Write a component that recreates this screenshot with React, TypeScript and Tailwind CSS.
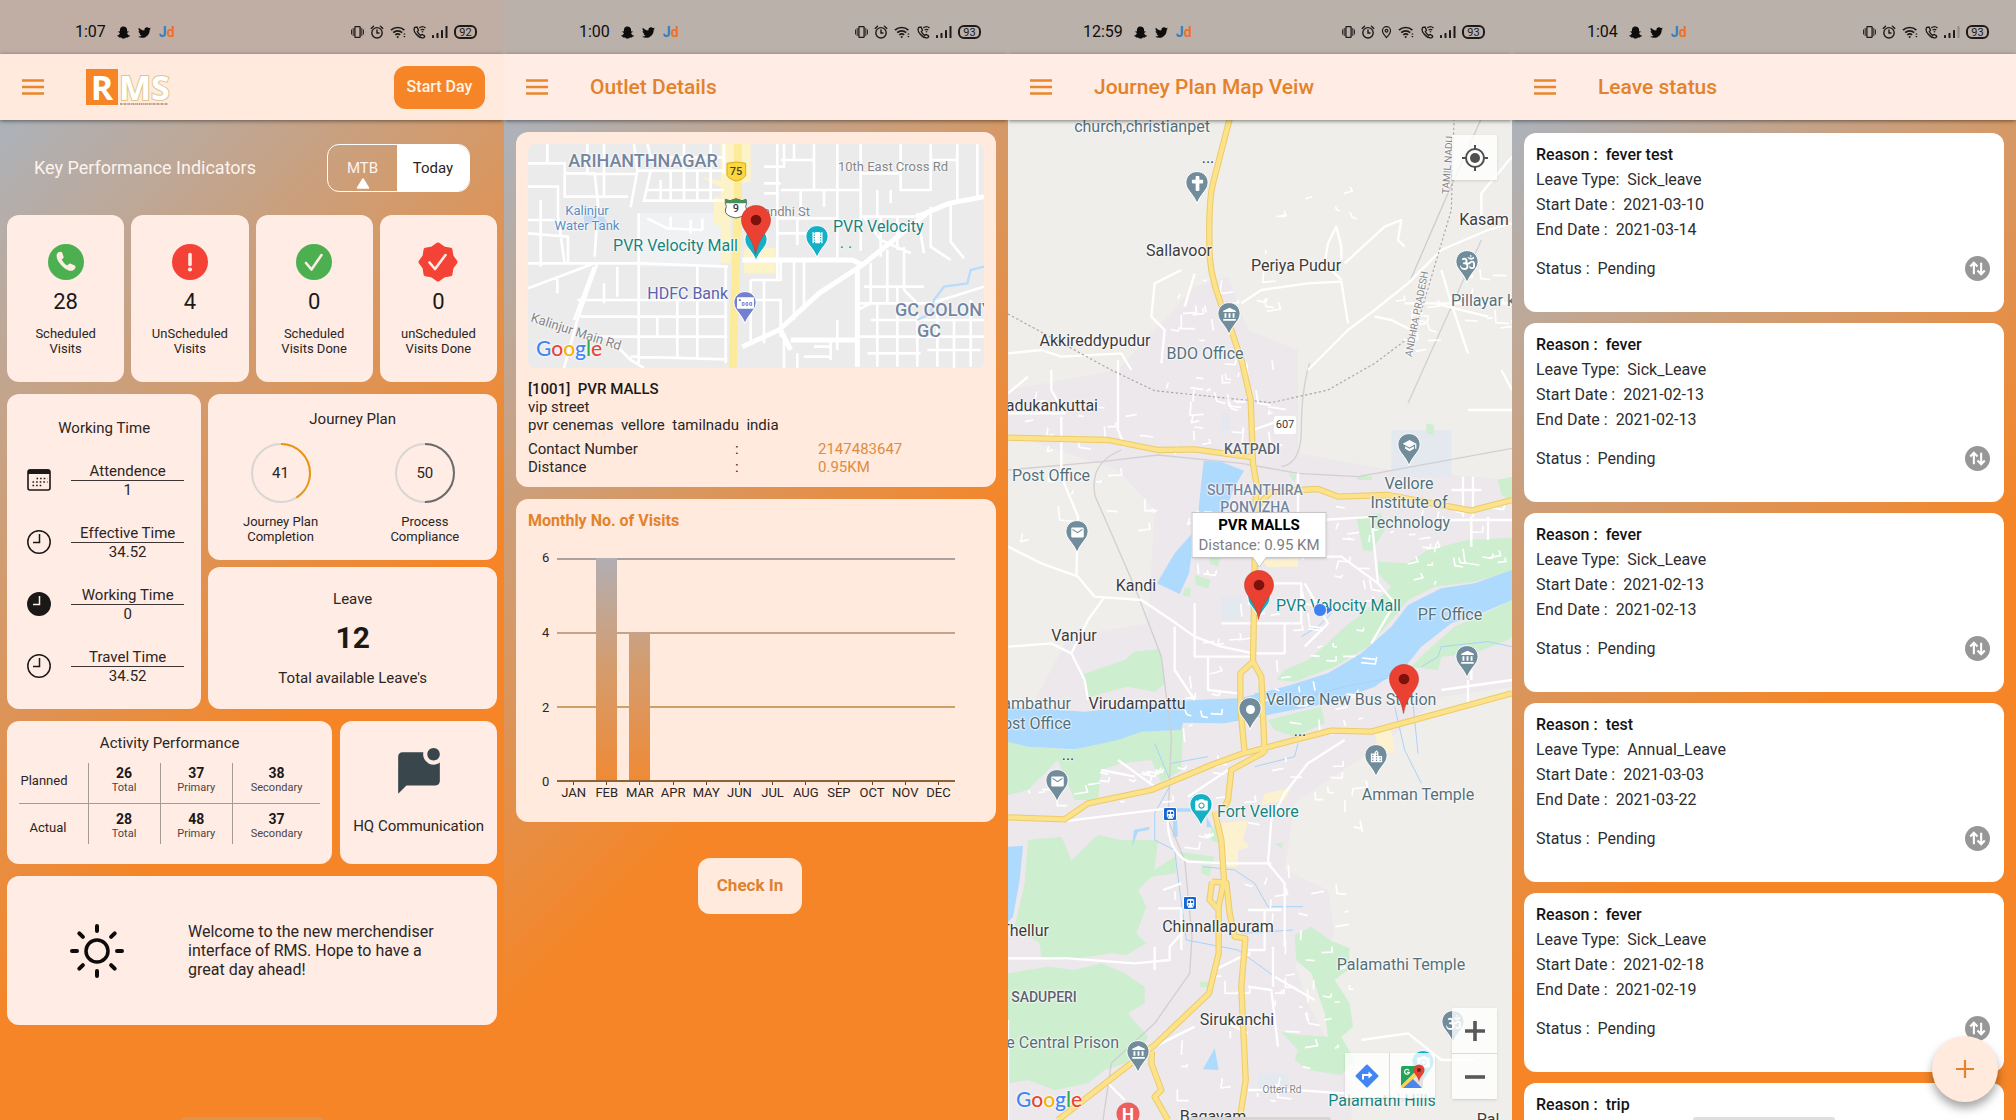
import React from "react";
import type { ReactNode } from "react";
import { FaSnapchatGhost, FaTwitter, FaOm, FaCross } from "react-icons/fa";
import {
  MdAccountBalance,
  MdCameraAlt,
  MdDirectionsSubway,
  MdEmail,
  MdLocationCity,
  MdMarkChatUnread,
  MdSchool,
  MdTheaters,
} from "react-icons/md";

/* ---------- status bar ---------- */

function StatusIcons({ location, weakSignal, battery }: { location?: boolean; weakSignal?: boolean; battery: string }) {
  return (
    <div className="flex items-center gap-[6px] text-[#1d1a19]">
      <svg viewBox="0 0 13 14" className="h-[14px] w-[13px]" fill="none" stroke="currentColor" strokeWidth="1.3">
        <rect x="3.9" y="1.700" width="5.200" height="10.600" rx=".6" />
        <path d="M2.200 3v8M10.800 3v8" strokeWidth=".9" />
        <path d="M.6 4.500v5M12.400 4.500v5" strokeWidth="1" />
      </svg>
      <svg viewBox="0 0 14 14" className="h-[14px] w-[14px]" fill="none" stroke="currentColor" strokeWidth="1.4" strokeLinecap="round">
        <circle cx="7" cy="7.8" r="5.200" />
        <path d="M7 5v3h2M1.200 3.400 3.500 1.300M12.800 3.400 10.500 1.300" />
      </svg>
      {location && (
        <svg viewBox="0 0 12 14" className="h-[14px] w-[11px]" fill="none" stroke="currentColor" strokeWidth="1.3">
          <path d="M6 13C3.500 10.300 1.600 8.200 1.600 5.600a4.400 4.400 0 0 1 8.800 0C10.400 8.200 8.500 10.300 6 13Z" />
          <circle cx="6" cy="5.600" r="1.500" />
        </svg>
      )}
      <svg viewBox="0 0 17 14" className="h-[14px] w-[17px]" fill="none" stroke="currentColor" strokeWidth="1.700">
        <path d="M1 5.200a9.600 9.600 0 0 1 13.400 0M3.200 7.700a6.500 6.500 0 0 1 9-.1M5.300 10a3.500 3.500 0 0 1 4.800 0" />
        <circle cx="7.700" cy="12" r="1" fill="currentColor" stroke="none" />
        <path d="M13.200 9.500l1.200-1.500 1.200 1.500ZM13.200 11l1.200 1.500 1.200-1.500Z" fill="currentColor" stroke="none" />
      </svg>
      <svg viewBox="0 0 13 14" className="h-[14px] w-[13px]" fill="none" stroke="currentColor" strokeWidth="1.300">
        <path d="M2 2.300c-1.300 1.500-.9 4.500 1.300 7s5 4 7 3.500c1-.3 1.500-1 1.300-1.800L9.300 9.400l-1.700 1C6.300 9.700 4.900 8.200 4.300 6.600l1.200-1.500L4 2Z" />
        <path d="M6.300 3a4.700 4.700 0 0 1 6.200 0M7.700 5a3 3 0 0 1 3.600 0" />
        <circle cx="9.500" cy="6.800" r=".8" fill="currentColor" stroke="none" />
      </svg>
      <svg viewBox="0 0 16 14" className="h-[14px] w-[16px]" fill="currentColor">
        <rect x="0" y="10" width="2" height="3" rx=".5" />
        <rect x="4.500" y="8" width="2" height="5" rx=".5" />
        <rect x="9" y="5" width="2" height="8" rx=".5" />
        <rect x="13.500" y="1" width="2" height="12" rx=".5" opacity={weakSignal ? 0.25 : 1} />
      </svg>
      <span className="flex h-[14px] w-[23px] items-center justify-center rounded-[6px] border-2 border-current text-[11px] leading-none">
        {battery}
      </span>
    </div>
  );
}

interface PhoneProps {
  time: string;
  battery: string;
  tint?: string;
  barTint?: string;
  location?: boolean;
  weakSignal?: boolean;
  header: ReactNode;
  homeTint: string;
  children: ReactNode;
}

function Phone({ time, battery, tint = "bg-[#bbb1ab]", barTint = "bg-[#feece5]", location, weakSignal, header, homeTint, children }: PhoneProps) {
  return (
    <section className="relative flex h-screen min-w-0 flex-col overflow-hidden bg-[linear-gradient(135deg,#adb2b9_8%,#f58526_63%)]">
      <div className={`flex h-[54px] shrink-0 items-center justify-between pt-[10px] pr-[27px] pl-[75px] ${tint}`}>
        <div className="flex items-center gap-2 text-[#0f0d0c]">
          <span className="mr-[3px] text-base leading-5">{time}</span>
          <FaSnapchatGhost className="size-[13px]" />
          <FaTwitter className="size-[13px]" />
          <span className="text-[14px] leading-5 font-bold">
            <span className="text-[#2f7fc4]">J</span>
            <span className="text-[#f0702a]">d</span>
          </span>
        </div>
        <StatusIcons location={location} weakSignal={weakSignal} battery={battery} />
      </div>
      <header className={`relative z-10 flex h-[66px] shrink-0 items-center pr-[19px] pl-[22px] shadow-[0_1px_4px_rgba(0,0,0,0.5)] ${barTint}`}>
        <button type="button" aria-label="Open menu" className="mr-[42px] text-[#e8872e]">
          <svg viewBox="0 0 22 16" className="h-4 w-[22px]" stroke="currentColor" strokeWidth="2.300">
            <path d="M0 1.500h22M0 8h22M0 14.500h22" />
          </svg>
        </button>
        {header}
      </header>
      <main className="relative flex min-h-0 grow flex-col">{children}</main>
      <span className={`absolute bottom-0 left-1/2 h-[3px] w-[142px] -translate-x-1/2 rounded-t ${homeTint}`} />
    </section>
  );
}

const Title = ({ children }: { children: ReactNode }) => (
  <h1 className="text-[21px] leading-6 font-medium text-[#e3822a]">{children}</h1>
);

const Card = ({ className = "", children }: { className?: string; children: ReactNode }) => (
  <div className={`rounded-xl bg-[#feece5] ${className}`}>{children}</div>
);

/* ---------- dashboard ---------- */

function Logo() {
  return (
    <div className="flex h-9 items-start font-['Open_Sans',sans-serif] text-[34px] leading-9 font-bold text-white" aria-label="RMS">
      <span className="flex h-9 w-8 items-center justify-center bg-[#f58526]">R</span>
      <span className="relative ml-px [-webkit-text-stroke:2px_#dcc78d] [paint-order:stroke_fill]">
        MS
        <svg viewBox="0 0 50 2" className="absolute bottom-0 left-0 h-[2px] w-[50px]">
          <path d="M1 1h48" stroke="#a08a78" strokeWidth="1.600" strokeDasharray="2 .6 1 .5" />
        </svg>
      </span>
    </div>
  );
}

const PhoneCircle = () => (
  <svg viewBox="0 0 36 36" className="size-9">
    <circle cx="18" cy="18" r="18" fill="#4caf50" />
    <path
      d="M10 8.500c-2.300 2-1.800 6.200 1.500 10.500 4 5.300 9 8.600 12.600 7.700 1.900-.5 3.200-2 3.400-3.700.1-.7-.2-1.200-.8-1.500l-4.300-1.900c-.6-.3-1.100-.1-1.500.4l-1.500 1.600c-2.600-1.300-4.500-3.400-5.700-6l1.600-1.500c.4-.4.500-.9.300-1.400l-1.500-4.100c-.2-.6-.7-.9-1.300-.9-1 .1-2 .2-2.800.8Z"
      fill="#feece5"
    />
  </svg>
);

const TickCircle = () => (
  <svg viewBox="0 0 36 36" className="size-9">
    <circle cx="18" cy="18" r="18" fill="#4caf50" />
    <path d="m10 19 5.500 6.500L25.500 11" fill="none" stroke="#feece5" strokeWidth="2.600" strokeLinecap="round" strokeLinejoin="round" />
  </svg>
);

const AlertCircle = () => (
  <svg viewBox="0 0 36 36" className="size-9">
    <circle cx="18" cy="18" r="18" fill="#f44336" />
    <path d="M18 10.500v10" stroke="#feece5" strokeWidth="3.600" strokeLinecap="round" />
    <circle cx="18" cy="25.500" r="2.100" fill="#feece5" />
  </svg>
);

const TickBadge = () => (
  <svg viewBox="0 0 40 40" className="size-10">
    <path
      d="M20 2.500 25.600 6.500 32.400 7.600 33.500 14.400 37.500 20 33.500 25.600 32.400 32.400 25.600 33.500 20 37.500 14.400 33.500 7.600 32.400 6.500 25.600 2.500 20 6.500 14.400 7.600 7.600 14.400 6.500Z"
      fill="#f44336"
      stroke="#f44336"
      strokeWidth="4"
      strokeLinejoin="round"
    />
    <path d="m11.500 20.500 5.500 6.500L27.500 13" fill="none" stroke="#feece5" strokeWidth="2.600" strokeLinecap="round" strokeLinejoin="round" />
  </svg>
);

const kpis = [
  { icon: <PhoneCircle />, value: 28, lines: ["Scheduled", "Visits"] },
  { icon: <AlertCircle />, value: 4, lines: ["UnScheduled", "Visits"] },
  { icon: <TickCircle />, value: 0, lines: ["Scheduled", "Visits Done"] },
  { icon: <TickBadge />, value: 0, lines: ["unScheduled", "Visits Done"] },
];

const CalendarIcon = () => (
  <svg viewBox="0 0 24 24" className="size-6" fill="none">
    <rect x="1" y="2" width="22" height="20" rx="2" stroke="#1b1918" strokeWidth="1.600" />
    <path d="M1 3.500Q1 1.300 3 1.300h18q2 0 2 2.200V6H1Z" fill="#1b1918" />
    <path d="M9.500 10.500h11M5.500 14h15M5.500 17.500h10.500" stroke="#1b1918" strokeWidth="1.600" strokeDasharray="1.600 2" />
  </svg>
);

const ClockIcon = ({ filled }: { filled?: boolean }) => (
  <svg viewBox="0 0 24 24" className="size-6" stroke={filled ? "#feece5" : "#1b1918"} strokeWidth="1.500">
    <circle cx="12" cy="12" r="11.200" fill={filled ? "#1b1918" : "none"} stroke="#1b1918" />
    <path d="M12.500 4v8.500H6" fill="none" />
  </svg>
);

const workingRows = [
  { icon: <CalendarIcon />, label: "Attendence", value: "1" },
  { icon: <ClockIcon />, label: "Effective Time", value: "34.52" },
  { icon: <ClockIcon filled />, label: "Working Time", value: "0" },
  { icon: <ClockIcon />, label: "Travel Time", value: "34.52" },
];

function Ring({ value, color, lines }: { value: number; color: string; lines: string[] }) {
  const length = 2 * Math.PI * 29;
  return (
    <div className="flex flex-col items-center">
      <div className="grid size-[60px] place-items-center">
        <svg viewBox="0 0 60 60" className="col-start-1 row-start-1 size-[60px] -rotate-90" fill="none" strokeWidth="2">
          <circle cx="30" cy="30" r="29" stroke="#dad6d4" />
          <circle cx="30" cy="30" r="29" stroke={color} strokeDasharray={`${(length * value) / 100} ${length}`} />
        </svg>
        <span className="col-start-1 row-start-1 text-[15px] leading-5">{value}</span>
      </div>
      <p className="mt-[11px] text-center text-[13px] leading-[15px]">
        {lines[0]}
        <br />
        {lines[1]}
      </p>
    </div>
  );
}

const activity = [
  { name: "Planned", pad: "pr-5 pb-1", cells: [["26", "Total"], ["37", "Primary"], ["38", "Secondary"]] },
  { name: "Actual", pad: "pr-[21px] pt-2", cells: [["28", "Total"], ["48", "Primary"], ["37", "Secondary"]] },
];

function Dashboard() {
  return (
    <Phone
      time="1:07"
      battery="92"
      tint="bg-[#c0aea4]"
      barTint="bg-[#ffeadd]"
      homeTint="bg-[#dd9352]"
      header={
        <>
          <Logo />
          <button type="button" className="ml-auto h-[43px] w-[91px] rounded-xl bg-[#f58526] text-base font-medium text-[#fff3e8]">
            Start Day
          </button>
        </>
      }
    >
      <div className="flex flex-col px-[7px] text-[#2b2523]">
        <div className="flex h-[95px] items-center justify-between pt-px pr-[27px] pl-[27px]">
          <h2 className="text-lg text-[#fdf3ec]">Key Performance Indicators</h2>
          <div className="flex h-12 w-[143px] overflow-hidden rounded-xl border border-white text-[15px]">
            <button type="button" className="relative grow text-[#fdf3ec]">
              MTB
              <svg viewBox="0 0 13 11" className="absolute bottom-[2px] left-1/2 h-[11px] w-[13px] -translate-x-1/2">
                <path d="M6.500 1 12 10H1Z" fill="#fff" stroke="#fff" strokeWidth="1.500" strokeLinejoin="round" />
              </svg>
            </button>
            <button type="button" className="w-[72px] bg-white">Today</button>
          </div>
        </div>

        <div className="grid grid-cols-4 gap-[7px]">
          {kpis.map((k) => (
            <Card key={k.lines.join()} className="flex h-[167px] flex-col items-center">
              <span className="mt-[27px] flex h-10 items-center">{k.icon}</span>
              <strong className="mt-[6px] text-[22px] leading-7 font-normal text-[#1b1918]">{k.value}</strong>
              <span className="mt-[10px] text-center text-[13px] leading-[15px]">
                {k.lines[0]}
                <br />
                {k.lines[1]}
              </span>
            </Card>
          ))}
        </div>

        <div className="mt-3 grid h-[315px] grid-cols-[97fr_144fr] gap-[7px] text-[15px]">
          <Card className="pt-6">
            <h3 className="text-center leading-5">Working Time</h3>
            <dl className="mt-[22px] flex flex-col gap-[22px]">
              {workingRows.map((r, i) => (
                <div key={i} className="flex h-10 items-center pr-[17px] pl-5">
                  {r.icon}
                  <div className="ml-5 grow text-center leading-[18px]">
                    <dt className="border-b border-[#3b3533]">{r.label}</dt>
                    <dd>{r.value}</dd>
                  </div>
                </div>
              ))}
            </dl>
          </Card>
          <div className="flex flex-col gap-[7px]">
            <Card className="h-[166px] pt-[15px]">
              <h3 className="text-center leading-5">Journey Plan</h3>
              <div className="mt-[14px] grid grid-cols-2">
                <Ring value={41} color="#ed940a" lines={["Journey Plan", "Completion"]} />
                <Ring value={50} color="#6d6a69" lines={["Process", "Compliance"]} />
              </div>
            </Card>
            <Card className="flex grow flex-col items-center pt-[22px]">
              <h3 className="leading-5">Leave</h3>
              <strong className="mt-[11px] text-[30px] leading-9 font-bold text-[#1b1918]">12</strong>
              <span className="mt-3 leading-5">Total available Leave's</span>
            </Card>
          </div>
        </div>

        <div className="mt-3 grid h-[143px] grid-cols-[27fr_13fr] gap-2">
          <Card className="px-3 pt-3">
            <h3 className="text-center text-[15px] leading-5">Activity Performance</h3>
            <table className="mt-[10px] w-full table-fixed border-collapse text-center">
              <tbody>
                {activity.map((row, r) => (
                  <tr key={row.name} className={r === 0 ? "h-10 border-b border-[#a49b97]" : "h-[41px]"}>
                    <th scope="row" className={`w-[69px] text-right text-[13px] font-normal ${row.pad}`}>
                      {row.name}
                    </th>
                    {row.cells.map(([n, l]) => (
                      <td key={l} className={`border-l border-[#a49b97] leading-[15px] ${l === "Secondary" ? "w-[88px]" : ""} ${r ? "pt-1" : "pb-[6px]"}`}>
                        <strong className="block text-sm leading-4 font-bold text-[#1b1918]">{n}</strong>
                        <span className="block text-[11px] leading-[14px] text-[#4c4442]">{l}</span>
                      </td>
                    ))}
                  </tr>
                ))}
              </tbody>
            </table>
          </Card>
          <Card className="flex flex-col items-center pt-[27px]">
            <MdMarkChatUnread className="size-[50px] text-[#39474c]" />
            <span className="mt-[18px] text-[15px] leading-5">HQ Communication</span>
          </Card>
        </div>

        <Card className="mt-3 flex h-[149px] items-center pl-[63px]">
          <svg viewBox="0 0 54 54" className="size-[54px] shrink-0" fill="none" stroke="#0d0c0b" strokeWidth="4" strokeLinecap="round">
            <circle cx="27" cy="27" r="11" strokeWidth="3.500" />
            <path d="M27 2v5M27 47v5M2 27h5M47 27h5M9.300 9.300l3.600 3.600M41.100 41.100l3.600 3.600M9.300 44.700l3.600-3.600M41.100 12.900l3.600-3.600" />
          </svg>
          <p className="ml-16 w-64 text-base leading-[19px]">
            Welcome to the new merchendiser interface of RMS. Hope to have a great day ahead!
          </p>
        </Card>
      </div>
    </Phone>
  );
}

/* ---------- map parts ---------- */

type Tone = "town" | "place" | "area" | "district" | "districtLarge" | "districtSmall" | "teal" | "bank" | "water" | "road" | "tiny";

const tones: Record<Tone, string> = {
  town: "text-base text-[#3c3c3e]",
  place: "text-base text-[#54707b]",
  area: "text-sm font-medium text-[#5c6270]",
  district: "text-base font-medium text-[#7485a0]",
  districtLarge: "text-lg font-medium text-[#7485a0]",
  districtSmall: "text-sm font-medium text-[#7485a0]",
  teal: "text-base text-[#158480]",
  bank: "text-base text-[#5a63ad]",
  water: "text-[13px] text-[#5b8cc2]",
  road: "text-[13px] text-[#858587]",
  tiny: "text-[10px] text-[#858587]",
};

const anchors = { c: "-translate-x-1/2", l: "", r: "-translate-x-full" };

interface Spot {
  t: string;
  x: number;
  y: number;
  tone: Tone;
  a?: keyof typeof anchors;
  extra?: string;
}

const place = (x: number, y: number, w: number, h: number) => ({ left: `${(x / w) * 100}%`, top: `${(y / h) * 100}%` });

function Labels({ spots, w, h }: { spots: Spot[]; w: number; h: number }) {
  return (
    <>
      {spots.map((s, i) => (
        <span
          key={i}
          className={`absolute -translate-y-1/2 leading-5 whitespace-nowrap [text-shadow:0_0_2px_#fff,0_0_2px_#fff,0_0_3px_#fff] ${anchors[s.a ?? "c"]} ${tones[s.tone]} ${s.extra ?? ""}`}
          style={place(s.x, s.y, w, h)}
        >
          {s.t}
        </span>
      ))}
    </>
  );
}

/* The drop's head is centred 12px below its top. */
function Drop({ x, y, w, h, color = "#718c9b", children }: { x: number; y: number; w: number; h: number; color?: string; children?: ReactNode }) {
  return (
    <span className="absolute h-9 w-6 -translate-x-1/2 -translate-y-3" style={place(x, y, w, h)}>
      <svg viewBox="0 0 24 36" className="absolute inset-0 h-9 w-6">
        <path d="M12 .6C5.700.6.900 5.500.900 11.600.900 19 8 22 12 32.500 16 22 23.100 19 23.100 11.600 23.100 5.500 18.300.6 12 .6Z" fill={color} stroke="#fff" strokeWidth="1" />
      </svg>
      <span className="absolute inset-x-0 top-0 flex h-6 items-center justify-center text-[15px] text-white">{children}</span>
    </span>
  );
}

function Marker({ x, y, w, h }: { x: number; y: number; w: number; h: number }) {
  return (
    <svg viewBox="0 0 30 50" className="absolute h-[50px] w-[30px] -translate-x-1/2 -translate-y-full" style={place(x, y, w, h)}>
      <path d="M15 .5C6.800.500.500 7 .500 15c0 11 11.500 16 14 34.500C17.500 31 29.500 26 29.500 15 29.500 7 23.200.500 15 .500Z" fill="#ea4133" stroke="#c5382c" strokeWidth=".6" />
      <circle cx="15" cy="15" r="5.300" fill="#7c120c" />
    </svg>
  );
}

const Google = ({ className }: { className: string }) => (
  <span className={`absolute font-['Lato',sans-serif] text-[21px] leading-6 font-medium [text-shadow:0_0_2px_#fff,0_0_3px_#fff] ${className}`}>
    <span className="text-[#4285f4]">G</span>
    <span className="text-[#ea4335]">o</span>
    <span className="text-[#f4b400]">o</span>
    <span className="text-[#4285f4]">g</span>
    <span className="text-[#34a853]">l</span>
    <span className="text-[#ea4335]">e</span>
  </span>
);

/* ---------- outlet details ---------- */

const outletSpots: Spot[] = [
  { t: "ARIHANTHNAGAR", x: 115, y: 17, tone: "districtLarge" },
  { t: "10th East Cross Rd", x: 365, y: 23, tone: "road" },
  { t: "Kalinjur", x: 59, y: 67, tone: "water" },
  { t: "Water Tank", x: 59, y: 82, tone: "water" },
  { t: "Gandhi St", x: 282, y: 68, tone: "road", a: "r" },
  { t: "PVR Velocity Mall", x: 210, y: 102, tone: "teal", a: "r" },
  { t: "PVR Velocity", x: 305, y: 83, tone: "teal", a: "l" },
  { t: ". .", x: 318, y: 99, tone: "teal" },
  { t: "HDFC Bank", x: 200, y: 150, tone: "bank", a: "r" },
  { t: "GC COLONY", x: 367, y: 166, tone: "districtLarge", a: "l" },
  { t: "GC", x: 401, y: 187, tone: "districtLarge" },
  { t: "Kalinjur Main Rd", x: 48, y: 188, tone: "road", extra: "rotate-[18deg]" },
];

function OutletMap() {
  const size = { w: 456, h: 224 };
  return (
    <div className="relative h-[224px] overflow-hidden rounded-lg bg-[#ebebec]">
      <svg viewBox="72 432 1368 672" preserveAspectRatio="xMidYMid slice" className="absolute inset-0 size-full" fill="none" stroke="#fff">
        <path d="M400 640h250v160H400Z" fill="#f0f1f2" stroke="none" />
        <path d="M650 432h90v110l-30 10v70h-60v-60l-60-30 60 10ZM630 590h50v200h-30V680l-20-10ZM720 745h95v75h-95Z" fill="#fdf3c9" stroke="none" />
        <path
          strokeWidth="8"
          d="M72 490h110v100h190M72 560h90v90l20 140M130 432v60M182 520h90l10 90-10 160M250 432v90h150M300 432v160M72 660h80M110 600v200M72 700l120 10v80M390 432l10 80-20 110M400 512h260M440 512l-20 90h240M470 540v60M500 512v90M540 432v170M580 512v90M620 432v170M430 432l10 40h220M660 432v90M430 570h230M72 790h340l260 10M72 865l160-60 40-16M404 640v450M210 960l60-160M280 790l-60 170-40 144M220 900h450M230 950h440M240 1010h430M380 1070l290 8M340 1040l40 40 40 24M580 795v280M520 900v170M460 950v60M340 800v90M665 800v290M300 850v60M160 830v50M430 655l60 30 105 5M500 650v40M560 660v40M595 655v35"
        />
        <path
          strokeWidth="8"
          d="M780 500h60v-68M820 432v410M780 550h50M780 580h45M740 640h80M830 570h240M830 480h100v-48M930 480v90M870 432v50M890 570v70M960 570v50M1070 432v320M1000 432v340M820 655h180M820 700h90M880 655v80M930 700v60M1070 520h120v50h90v-138M1190 520v-88M1120 570v80h60M1160 570v40M1070 650h160l50-20M1130 650v120M1180 650v100M1240 640l20 120M1280 620v120l60 40M1340 605v120l40 50M1360 432v170M1280 480h80M1420 432v160M740 840h90v-60M740 900h90v110M740 840v180M780 840v190M870 780v180M900 780v150M1080 650l50 70 90 40M1100 790v120l-40 20M1150 750v160M1200 740v130l40 40M1080 860h180M1060 910h220l160-50M1100 960h340M1060 1010h380M1120 910v190M1180 860v240M1240 940v160M1300 920v180M1350 960v144M1400 900v200M880 1060v44M930 1040h50v30h-80M980 1020v60M1090 1060h160M1270 1050h160M1000 960v90M840 1010v94"
        />
        <path strokeWidth="15" d="M715 780h330l30 15M1075 795l200-160 60-25 105-20M715 1040l110-50 120-110 130-85M1060 800v300M830 990l30 60M860 1020h200" />
        <path d="M1440 800l-40 10-10 40-70 10-30 40-10 40-40 20" stroke="#b8dcfb" strokeWidth="7" />
        <path d="M702 432v170l-10 300-6 202" stroke="#fdeb9c" strokeWidth="24" />
        <path d="M240 645l60 5 20 40h-40v-20h-40Z" fill="#9dcbfa" stroke="none" opacity=".5" />
        <path d="M669 490q28-8 56 0v35q-4 12-28 18-24-6-28-18Z" fill="#fcd73d" stroke="#d7ad1e" strokeWidth="3" />
        <path d="M664 598l14 4 18-6 18 6 12-4 2 12q-6 8 0 20 2 18-32 24-34-6-32-24 6-12 0-20Z" fill="#fff" stroke="#5f6a5f" strokeWidth="3" />
        <path d="M664 598l14 4 18-6 18 6 12-4 2 12h-64Z" fill="#47905b" stroke="none" />
      </svg>
      <Labels spots={outletSpots} {...size} />
      <span className="absolute -translate-1/2 text-[11px] leading-3 font-medium text-[#4a4327]" style={place(208, 28, size.w, size.h)}>75</span>
      <span className="absolute -translate-1/2 text-[11px] leading-3 font-medium text-[#3c3c3e]" style={place(208, 65, size.w, size.h)}>9</span>
      <Drop x={228} y={96} color="#15b0c6" {...size} />
      <Drop x={289} y={93} color="#15b0c6" {...size}><MdTheaters /></Drop>
      <Drop x={217} y={159} color="#7280cf" {...size}>
        <svg viewBox="0 0 18 12" className="h-3 w-[17px]">
          <rect width="18" height="12" rx="1" fill="#fff" />
          <circle cx="3" cy="3" r="1.200" fill="#7280cf" />
          <path d="M5.500 5.500h2v3h-2ZM9.500 5.500h2v3h-2ZM13.500 5.500h2v3h-2Z" stroke="#7280cf" fill="none" />
        </svg>
      </Drop>
      <Marker x={228} y={111} {...size} />
      <Google className="bottom-2 left-2" />
    </div>
  );
}

const months = ["JAN", "FEB", "MAR", "APR", "MAY", "JUN", "JUL", "AUG", "SEP", "OCT", "NOV", "DEC"];
const visits = [0, 6, 4, 0, 0, 0, 0, 0, 0, 0, 0, 0];
const gridLines = [
  { n: 6, c: "border-[#aaa2a0]" },
  { n: 4, c: "border-[#c3a48b]" },
  { n: 2, c: "border-[#cf9f68]" },
];

function VisitsChart() {
  return (
    <div className="mt-[27px] mr-[29px] ml-[14px] flex text-[13px] text-[#2b2523]">
      <div className="flex w-[15px] shrink-0 flex-col justify-between">
        {[6, 4, 2, 0].map((n) => (
          <span key={n} className="flex h-0 items-center">{n}</span>
        ))}
      </div>
      <div className="grow">
        <div className="relative flex h-[224px] flex-col border-b-2 border-[#8f6334]">
          {gridLines.map((g) => (
            <span key={g.n} className={`grow border-t-2 ${g.c}`} />
          ))}
          <div className="absolute inset-0 grid grid-cols-12 items-end">
            {visits.map((v, i) => (
              <span
                key={i}
                className="mx-auto w-[21px] bg-[linear-gradient(#b2aeb3,#d59c6d_50%,#ef8a35)] bg-[length:100%_222px] bg-bottom"
                style={{ height: `${(v / 6) * 100}%` }}
              />
            ))}
          </div>
        </div>
        <div className="grid h-0 grid-cols-12 text-[13px]">
          {months.map((m) => (
            <span key={m} className="flex flex-col items-center leading-4">
              <i className="h-[3px] w-px bg-[#5f4425]" />
              {m}
            </span>
          ))}
        </div>
      </div>
    </div>
  );
}

function Outlet() {
  return (
    <Phone time="1:00" battery="93" homeTint="bg-transparent" header={<Title>Outlet Details</Title>}>
      <div className="flex flex-col p-3 text-[15px] text-[#2b2523]">
        <div className="h-[355px] rounded-xl bg-[#ffeadd] p-3">
          <OutletMap />
          <div className="mt-3 leading-[18px]">
            <h2 className="font-medium text-[#1b1918]">[1001]&nbsp; PVR MALLS</h2>
            <p>vip street</p>
            <p>pvr cenemas&nbsp; vellore&nbsp; tamilnadu&nbsp; india</p>
            <dl className="mt-[6px] grid grid-cols-[207px_83px_1fr]">
              <dt>Contact Number</dt>
              <dd>:</dd>
              <dd className="text-[#dd8d42]">2147483647</dd>
              <dt>Distance</dt>
              <dd>:</dd>
              <dd className="text-[#dd8d42]">0.95KM</dd>
            </dl>
          </div>
        </div>
        <div className="mt-3 h-[323px] rounded-xl bg-[#ffeadd] p-3">
          <h2 className="text-base leading-5 font-bold text-[#e3822a]">Monthly No. of Visits</h2>
          <VisitsChart />
        </div>
        <div className="mt-9 flex justify-center pr-3">
          <button type="button" className="h-14 w-[104px] rounded-xl bg-[#ffeadd] text-[17px] font-bold text-[#dd8330]">
            Check In
          </button>
        </div>
      </div>
    </Phone>
  );
}

/* ---------- journey map ---------- */

const mapSpots: Spot[] = [
  { t: "church,christianpet", x: 134, y: 7, tone: "place" },
  { t: "...", x: 200, y: 38, tone: "town" },
  { t: "Sallavoor", x: 171, y: 131, tone: "town" },
  { t: "Periya Pudur", x: 288, y: 146, tone: "town" },
  { t: "Kasam", x: 476, y: 100, tone: "town" },
  { t: "Pillayar kovil", x: 443, y: 181, tone: "place", a: "l" },
  { t: "Akkireddypudur", x: 87, y: 221, tone: "town" },
  { t: "BDO Office", x: 197, y: 234, tone: "place" },
  { t: "TAMIL NADU", x: 440, y: 45, tone: "tiny", extra: "-rotate-[86deg]" },
  { t: "ANDHRA PRADESH", x: 409, y: 194, tone: "tiny", extra: "-rotate-[79deg]" },
  { t: "Varadukankuttai", x: 90, y: 286, tone: "town", a: "r" },
  { t: "KATPADI", x: 244, y: 329, tone: "area" },
  { t: "Post Office", x: 43, y: 356, tone: "place" },
  { t: "SUTHANTHIRA", x: 247, y: 370, tone: "districtSmall" },
  { t: "PONVIZHA", x: 247, y: 387, tone: "districtSmall" },
  { t: "Vellore", x: 401, y: 364, tone: "place" },
  { t: "Institute of", x: 401, y: 383, tone: "place" },
  { t: "Technology", x: 401, y: 403, tone: "place" },
  { t: "Kandi", x: 128, y: 466, tone: "town" },
  { t: "PVR Velocity Mall", x: 268, y: 486, tone: "teal", a: "l" },
  { t: "PF Office", x: 442, y: 495, tone: "place" },
  { t: "Vanjur", x: 66, y: 516, tone: "town" },
  { t: "Virudampattu", x: 129, y: 584, tone: "town" },
  { t: "Arambathur", x: 63, y: 584, tone: "place", a: "r" },
  { t: "Post Office", x: 63, y: 604, tone: "place", a: "r" },
  { t: "Vellore New Bus Station", x: 258, y: 580, tone: "place", a: "l" },
  { t: "...", x: 292, y: 611, tone: "town" },
  { t: "...", x: 60, y: 635, tone: "town" },
  { t: "Fort Vellore", x: 209, y: 692, tone: "teal", a: "l" },
  { t: "Amman Temple", x: 410, y: 675, tone: "place" },
  { t: "Chinnallapuram", x: 210, y: 807, tone: "town" },
  { t: "Thellur", x: 41, y: 811, tone: "town", a: "r" },
  { t: "Palamathi Temple", x: 393, y: 845, tone: "place" },
  { t: "SADUPERI", x: 36, y: 877, tone: "area" },
  { t: "Sirukanchi", x: 229, y: 900, tone: "town" },
  { t: "Vellore Central Prison", x: 111, y: 923, tone: "place", a: "r" },
  { t: "Otteri Rd", x: 274, y: 970, tone: "tiny" },
  { t: "Palamathi Hills", x: 374, y: 981, tone: "teal" },
  { t: "Bagayam", x: 205, y: 997, tone: "town" },
  { t: "Pal", x: 480, y: 1000, tone: "town" },
];

/* Short side lanes scattered over the built-up parts of the map. */
function lanes() {
  let seed = 7;
  const next = () => (seed = (seed * 16807) % 2147483647) / 2147483647;
  const zones = [
    [480, 480, 330, 500, 45],
    [520, 1130, 560, 700, 75],
    [1080, 1150, 400, 240, 25],
    [500, 1900, 560, 1050, 80],
    [40, 800, 400, 450, 22],
    [700, 200, 400, 260, 8],
    [1150, 430, 340, 280, 22],
    [60, 1950, 420, 110, 16],
  ];
  let d = "";
  for (const [x, y, w, h, n] of zones) {
    for (let i = 0; i < n; i++) {
      const flat = next() > 0.5;
      const a = Math.round(10 + next() * 34);
      const b = Math.round(next() * 14 - 7);
      d += `M${Math.round(x + next() * w)} ${Math.round(y + next() * h)}l${flat ? a : b} ${flat ? b : a}`;
      if (next() > 0.5) d += `l${flat ? b : a} ${flat ? -a / 2 : b}`;
    }
  }
  return d;
}

function Terrain() {
  const yellow =
    "M703 -20L728 90L735 280L745 340L742 420L740 600L735 880M735 875L697 910L697 1010L710 1150M735 875L760 920L770 1150M0 203L300 210L450 240L560 238L735 262M745 410L790 365L930 357L990 380L1140 375L1390 422L1512 390M0 1342L170 1348L240 1300L430 1260L610 1185L700 1152L860 1110L970 1082L1090 1085L1512 970M770 1140L765 1148L670 1200L660 1290L650 1310M620 1325L640 1410L648 1530L632 1610L632 1750L603 1870L440 2025L150 2250M612 1535L655 1538L665 1630L680 1700L712 1705L700 1850L713 2130L695 2250M612 1535L605 1590L632 1620M432 2045L430 2080L460 2160L440 2180L480 2250M668 -765L615 -560Q600 -500 605 -340Q612 -250 660 -150L703 -20";
  return (
    <svg viewBox="0 0 1512 3000" preserveAspectRatio="none" className="absolute inset-0 size-full" fill="none" strokeLinejoin="round">
      <g transform="translate(0 750)">
        <path
          fill="#ece8eb"
          d="M560-250L660-280 720-120 870-60 870 250 1150 300 1512 330V950L1300 980 1140 1110 860 1300 830 1500 960 1560 980 1700 860 1780 900 1900 1030 2150V2250H0V1150L180 800 420 760 440 420 330 300 0 190V60L330 0 440-120Z"
        />
        <path fill="#e4e8ef" d="M1150 180h180v140h-180ZM640 130h25v50h-25ZM640 680h60v70h-60ZM750 2110h90v60h-90Z" />
        <g fill="#cdeecf">
          <path d="M228 912L290 890 350 870 380 845 455 838 472 940 440 965 360 950 300 965 235 985Z" />
          <path d="M1110 575L1200 580 1260 540 1380 510 1512 503V602L1400 635 1280 650 1200 690 1150 750 1080 830 980 890 860 935 805 930 830 900 900 870 960 820 1000 780 1050 740 1100 700 1150 650 1110 610Z" />
          <path d="M1512 690L1420 735 1340 770 1250 850 1210 890 1290 900 1300 860 1400 850 1500 810 1512 800ZM780 1050L860 1030 940 1010 950 1060 860 1100 800 1080ZM1045 440L1120 430 1130 480 1090 545 1065 540ZM560 615L608 630 600 655 565 645ZM530 655L550 655 545 680 525 678ZM1255 160L1278 165 1275 195 1255 190ZM1470 330L1512 320V390L1480 375ZM840 310L866 315 860 335ZM1048 318H1092V330H1048ZM605 560L635 565 630 590 605 580Z" />
          <path d="M330 1085L525 1080 520 1200 460 1235 430 1170 340 1180 280 1200 270 1290 200 1290 150 1170 60 1260 0 1275V1110L60 1130 200 1140Z" />
          <path d="M60 1410L160 1400 190 1470 270 1395 340 1410 450 1410 440 1500 500 1460 505 1510 430 1520 390 1560 415 1610 385 1690 415 1720 355 1755 310 1750 180 1770 100 1765 95 1720 20 1670 50 1540Z" />
          <path d="M0 1810L120 1790 200 1800 280 1780 350 1810 410 1850 410 1900 360 1930 420 2000 400 2040 350 2080 290 2100 240 2140 140 2160 60 2130 0 2140Z" />
          <path d="M860 1695L910 1670 965 1710 1025 1735 1020 1800 980 1830 1025 1900 1035 1970 1000 2000 1040 2070 1000 2115 900 2100 860 2070 870 2040 820 1985 870 1995 960 2000 950 1930 910 1810 865 1770ZM510 1445L620 1460 615 1475 540 1468ZM580 1485L610 1488 605 1520 580 1510ZM610 1370L630 1370 632 1420 610 1410ZM575 1835L600 1835 600 1852 575 1850ZM800 1420L825 1420 820 1435Z" />
        </g>
        <g fill="#aedafd">
          <path d="M0 1010L230 1025 520 992 695 985 830 950 960 910 1060 850 1150 770 1200 705 1300 655 1400 640 1512 600V690L1420 730 1330 760 1240 830 1200 880 1100 950 960 1000 780 1035 650 1060 525 1058 520 1080 400 1085 330 1110 200 1138 60 1130 0 1115Z" />
          <path d="M587 272L640 276 708 302 680 350 650 425 571 425ZM551 492L500 550 447 640 515 672 543 610 552 540ZM0 1430L45 1428 35 1530 15 1640 0 1655ZM620 2035L632 2100 585 2098Z" />
          <path d="M495 1315H550V1325H505L510 1400H495ZM596 1340L612 1372H596ZM372 1430L378 1380 425 1370 422 1380 390 1385Z" />
        </g>
        <path fill="#fcf2cf" d="M770 1270L850 1255 830 1290 760 1305ZM640 1360L720 1350 705 1410 725 1430 690 1440 690 1490 655 1490ZM760 570L870 565 870 590 780 592ZM1100 1085L1150 1080 1160 1150 1110 1140Z" />
        <g stroke="#a9d3f8" strokeWidth="3">
          <path d="M1512 830L1440 815 1300 830 1290 860 1240 890M740 970L900 980 1010 950 1140 925M1160 1010L1190 1140 1240 1240M440 1120L490 1240 440 1330 440 1410 500 1440 515 1560 535 1710 690 1740 800 1820M490 1180L600 1160M585 1490L680 1500 740 1540 780 1610H885M700 1690L855 1680M970 730L930 770 880 800M870 1120L860 1160 740 1190M1215 1000L1230 1150" />
        </g>
        <g stroke="#cfcccf" strokeWidth="4">
          <path d="M0 300L280 275 450 255 700 280 870 310 1050 320 1512 235M340 240Q240 280 262 380L380 650 460 860 490 1100 480 1350 530 1470 552 1700 545 1810 440 1960 310 2080 285 2250M905 -20Q880 60 880 180 880 280 820 290M1420 -390L1200 100" opacity=".9" />
          <path d="M1418 -750L1320-530 1205-265" />
        </g>
        <g stroke="#fff" strokeWidth="7">
          <path d="M0 530L100 580 210 620 260 680 400 690 490 750 560 800 640 830 735 850M0 830L130 820 190 850 230 930 240 990M190 850L240 750 290 680M0 70L60 20M160 140V320L210 440 205 620M330-30V180L350 230M130 0V60L170 130H0M735 180L820 150M870 310V430L940 450 1100 440M750 560H1000L1110 640 1160 700 1090 820M750 640H880V760H640M830 760V850H735M560 700V860H735M500 770V900L560 990M1110 640L1090 440M890 640L960 760 890 830M600 860V960L690 970" />
          <path d="M0 1765H180L380 1780 485 1770V1730L530 1680M160 1355L400 1325 480 1315Q470 1440 540 1475L660 1480 790 1480M1010 1110L900 1180 830 1270 790 1350 780 1480 830 1540V1730M450 1615H520V1740M465 1560L520 1540M440 1730V1800M800 1820L920 1890M795 1730V1850M720 1620H820M720 1740H770V1620M720 1850L790 1860 810 2030M620 1800L700 1760M620 1940L720 1990M560 1970L440 2030M720 2160H860L1010 2170M330 1170L440 1250M1060 2010L1200 1990 1300 2070 1400 2070M280 1200L380 1220M540 1280L660 1200M290 2130L350 2190M0 1950V2250" />
          <path d="M1512 120H1380M1365 320V440M1395 320V440M1330 360H1420M1300 450H1512M1390 440V530M1440 440V510M1300 960L1512 930M1390 930V860M1380 1010V930M1480 0L1512 60" />
          <path d="M900 0L1020-120 1100-180 1200-260 1300-360 1440-420 1512-440M700-200L760-240 900-260 1000-265 1020-140M1010-320L1130-430 1180-450 1170-390 1190-370M1000-330V-370L985-430 960-380 950-320 1000-270M0-50L100-60 160-40 340-50 370 0M520-300L440-260 430-160 470-120 460-20M560-290L530-190M1190-200H1512M1300-300L1330-200 1380-50M1420-430V-530L1512-640M1100-160L1150-150 1210-120M1280-200L1440-160" />
        </g>
        <path d="M0-168L310 0 440 62 790 98 960 60 1100-20 1220-110 1330-480 1338-750" stroke="#a9a7a9" strokeWidth="3.500" strokeDasharray="7 7" />
      </g>
      <path d={lanes()} stroke="#fff" strokeWidth="5" />
      <g transform="translate(0 750)">
        <path d={yellow} stroke="#eccb68" strokeWidth="19" />
        <path d={yellow} stroke="#fde28c" strokeWidth="13" />
      </g>
    </svg>
  );
}

const Train = ({ x, y }: { x: number; y: number }) => (
  <span className="absolute flex size-[14px] -translate-1/2 items-center justify-center rounded-[2px] border border-white bg-[#1766d6] text-[11px] text-white" style={place(x, y, 504, 1000)}>
    <MdDirectionsSubway />
  </span>
);

function JourneyMap() {
  const size = { w: 504, h: 1000 };
  return (
    <Phone time="12:59" battery="93" location homeTint="bg-[#d9d5d3]" header={<Title>Journey Plan Map Veiw</Title>}>
      <div className="relative grow overflow-hidden bg-[#f0eeea]">
        <Terrain />
        <Drop x={189} y={63} {...size}><FaCross /></Drop>
        <Drop x={221} y={194} {...size}><MdAccountBalance /></Drop>
        <Drop x={459} y={142} {...size}><FaOm /></Drop>
        <Drop x={401} y={325} {...size}><MdSchool /></Drop>
        <Drop x={69} y={412} {...size}><MdEmail /></Drop>
        <Drop x={459} y={537} {...size}><MdAccountBalance /></Drop>
        <Drop x={242} y={589} {...size}><i className="size-[9px] rounded-full bg-white" /></Drop>
        <Drop x={49} y={661} {...size}><MdEmail /></Drop>
        <Drop x={368} y={636} {...size}><MdLocationCity /></Drop>
        <Drop x={193} y={685} color="#15b0c6" {...size}><MdCameraAlt /></Drop>
        <Drop x={130} y={932} {...size}><MdAccountBalance /></Drop>
        <Drop x={445} y={902} {...size}><FaOm /></Drop>
        <Drop x={415} y={942} color="#15b0c6" {...size}><MdCameraAlt /></Drop>
        <Drop x={251} y={478} color="#15b0c6" {...size} />
        <Train x={162} y={694} />
        <Train x={182} y={783} />
        <span className="absolute flex size-[23px] -translate-1/2 items-center justify-center rounded-full bg-[#ec5f5b] text-[17px] font-bold text-white" style={place(120, 994, 504, 1000)}>
          H
        </span>
        <Labels spots={mapSpots} {...size} />
        <span className="absolute flex h-[18px] w-[22px] -translate-1/2 items-center justify-center rounded-[2px] bg-white text-[11px] text-[#3c3c3e]" style={place(277, 305, 504, 1000)}>
          607
        </span>
        <svg viewBox="0 0 24 14" className="absolute h-[14px] w-6 -translate-x-[7px] -translate-y-[7px]" style={place(312, 490, 504, 1000)}>
          <path d="m14 3 5 4-5 4Z" fill="#3f7de8" />
          <circle cx="7" cy="7" r="6.500" fill="#3f80f0" stroke="#fff" strokeWidth=".8" />
        </svg>
        <Marker x={251} y={500} {...size} />
        <Marker x={396} y={594} {...size} />

        <div className="absolute w-[135px] -translate-x-1/2 -translate-y-full border border-[#c8c4c8] bg-white py-[2px] text-center leading-5 shadow-sm" style={place(251, 438, 504, 1000)}>
          <strong className="block text-[15px] font-bold text-black">PVR MALLS</strong>
          <span className="block text-[15px] text-[#7e7e80]">Distance: 0.95 KM</span>
          <svg viewBox="0 0 18 11" className="absolute top-full left-1/2 h-[11px] w-[18px] -translate-x-1/2">
            <path d="M2 0 9 10 16 0" fill="#fff" stroke="#c8c4c8" />
          </svg>
        </div>

        <button type="button" aria-label="My location" className="absolute top-[15px] right-[15px] flex size-[45px] items-center justify-center bg-white/80 shadow">
          <svg viewBox="0 0 26 26" className="size-[26px]" stroke="#4f4f51" strokeWidth="2" fill="none">
            <circle cx="13" cy="13" r="9" />
            <circle cx="13" cy="13" r="5" fill="#4f4f51" stroke="none" />
            <path d="M13 0v4M13 22v4M0 13h4M22 13h4" />
          </svg>
        </button>

        <div className="absolute right-[15px] bottom-[21px] flex flex-col bg-white/80 text-[#58585a] shadow">
          <button type="button" aria-label="Zoom in" className="flex h-[46px] w-[45px] items-center justify-center border-b border-[#dcd9d7]">
            <svg viewBox="0 0 20 20" className="size-5" stroke="currentColor" strokeWidth="3.600"><path d="M0 10h20M10 0v20" /></svg>
          </button>
          <button type="button" aria-label="Zoom out" className="flex h-[45px] w-[45px] items-center justify-center">
            <svg viewBox="0 0 20 20" className="size-5" stroke="currentColor" strokeWidth="3.600"><path d="M0 10h20" /></svg>
          </button>
        </div>

        <div className="absolute right-[77px] bottom-[22px] flex bg-white/80 shadow">
          <button type="button" aria-label="Directions" className="flex size-[45px] items-center justify-center border-r border-[#dcd9d7]">
            <svg viewBox="0 0 24 24" className="size-6">
              <path d="M12 1.500 22.500 12 12 22.500 1.500 12Z" fill="#4285f4" stroke="#4285f4" strokeWidth="2" strokeLinejoin="round" />
              <path d="M8 15.500V11h6" fill="none" stroke="#fff" strokeWidth="2" />
              <path d="M13.500 7.500 17.500 11l-4 3.500Z" fill="#fff" />
            </svg>
          </button>
          <button type="button" aria-label="Open in Maps" className="flex size-[45px] items-center justify-center">
            <svg viewBox="0 0 26 26" className="size-[26px]">
              <rect x="1" y="3" width="22" height="22" rx="2" fill="#e4e2df" />
              <path d="M3 3h18L1 23V5q0-2 2-2Z" fill="#23a35c" />
              <path d="M1 23 21 3l2 3L4 25H3q-2 0-2-2Z" fill="#fbd34c" />
              <path d="m3 25 10-9 9 9Z" fill="#4a86ec" />
              <path d="M19 1.500a5.500 5.500 0 0 0-5.500 5.500c0 4 4.500 6 5.500 12 1-6 5.500-8 5.500-12A5.500 5.500 0 0 0 19 1.500Z" fill="#e04334" />
              <circle cx="19" cy="7" r="2" fill="#7c1b14" />
              <path d="M9 7.500A2.400 2.400 0 1 0 9.300 9.300H7" fill="none" stroke="#fff" strokeWidth="1.200" />
            </svg>
          </button>
        </div>
        <Google className="bottom-[9px] left-2" />
      </div>
    </Phone>
  );
}

/* ---------- leave status ---------- */

const leaves = [
  { reason: "fever test", type: "Sick_leave", start: "2021-03-10", end: "2021-03-14" },
  { reason: "fever", type: "Sick_Leave", start: "2021-02-13", end: "2021-02-13" },
  { reason: "fever", type: "Sick_Leave", start: "2021-02-13", end: "2021-02-13" },
  { reason: "test", type: "Annual_Leave", start: "2021-03-03", end: "2021-03-22" },
  { reason: "fever", type: "Sick_Leave", start: "2021-02-18", end: "2021-02-19" },
];

function LeaveStatus() {
  return (
    <Phone time="1:04" battery="93" weakSignal homeTint="bg-[#dedede]" header={<Title>Leave status</Title>}>
      <ul className="flex min-h-0 grow flex-col gap-[11px] overflow-hidden px-3 pt-[13px] text-base text-[#2d2d2f]">
        {leaves.map((l, i) => (
          <li key={i} className="h-[179px] shrink-0 rounded-xl bg-white px-3 pt-[9px] leading-[25px]">
            <h2 className="font-medium text-[#141414]">Reason :&nbsp; {l.reason}</h2>
            <p>Leave Type:&nbsp; {l.type}</p>
            <p>Start Date :&nbsp; {l.start}</p>
            <p>End Date :&nbsp; {l.end}</p>
            <div className="mt-[14px] flex items-center justify-between pr-[2px]">
              <p>Status :&nbsp; Pending</p>
              <svg viewBox="0 0 24 24" className="size-[25px]">
                <circle cx="12" cy="12" r="12" fill="#979797" />
                <path d="M8.500 17.500V6.500M5 10l3.500-3.600L12 10M15.500 6.500v11M12 14l3.500 3.600L19 14" fill="none" stroke="#fff" strokeWidth="2" />
              </svg>
            </div>
          </li>
        ))}
        <li className="grow rounded-t-xl bg-white px-3 pt-[9px] leading-[25px]">
          <h2 className="font-medium text-[#141414]">Reason :&nbsp; trip</h2>
        </li>
      </ul>
      <button type="button" aria-label="Add leave" className="absolute right-[18px] bottom-[18px] flex size-[66px] items-center justify-center rounded-full bg-[#ffeadd] shadow-[0_6px_10px_rgba(0,0,0,0.35)]">
        <svg viewBox="0 0 18 18" className="size-[18px]" stroke="#e08433" strokeWidth="2.200"><path d="M0 9h18M9 0v18" /></svg>
      </button>
    </Phone>
  );
}

export default function App() {
  return (
    <div className="grid grid-cols-4 font-['Roboto',sans-serif]">
      <Dashboard />
      <Outlet />
      <JourneyMap />
      <LeaveStatus />
    </div>
  );
}
